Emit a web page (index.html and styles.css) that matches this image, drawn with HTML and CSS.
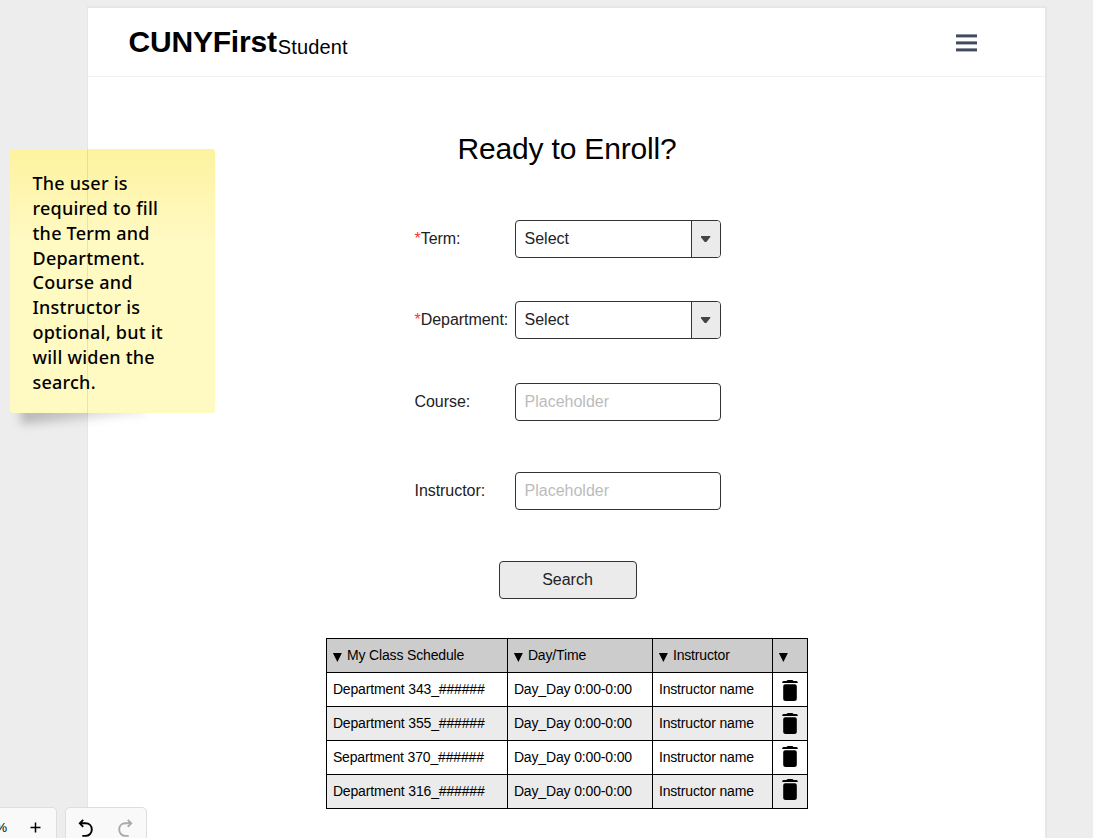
FILE: index.html
```html
<!DOCTYPE html>
<html lang="en">
<head>
<meta charset="utf-8">
<title>CUNYFirst Student</title>
<link rel="stylesheet" href="styles.css">
</head>
<body>
<svg class="defs" width="0" height="0">
  <symbol id="trash" viewBox="0 0 16 22">
    <path d="M4.500.9Q5 .1 6 .1H10Q11 .1 11.500.9H14.500Q15.700 1 15.900 3H.1Q.3 1 1.500.9ZM3.200 4.200H12.800Q14.800 4.200 14.800 6.200V18.500Q14.800 21 12.300 21H3.700Q1.200 21 1.200 18.500V6.200Q1.200 4.200 3.200 4.200Z"/>
  </symbol>
</svg>
<main class="page">
  <header class="header">
    <div class="logo"><strong>CUNYFirst</strong><span class="logo-sub">Student</span></div>
    <div class="menu"><i></i><i></i><i></i></div>
  </header>
  <h1>Ready to Enroll?</h1>
  <form class="form">
    <div class="row"><label><b>*</b>Term:</label><div class="field"><span>Select</span><div class="arrow"><i></i></div></div></div>
    <div class="row"><label><b>*</b>Department:</label><div class="field"><span>Select</span><div class="arrow"><i></i></div></div></div>
    <div class="row"><label>Course:</label><div class="field placeholder"><span>Placeholder</span></div></div>
    <div class="row last"><label>Instructor:</label><div class="field placeholder"><span>Placeholder</span></div></div>
  </form>
  <div class="search">Search</div>
  <section class="table">
    <div class="head"><i></i><span>My Class Schedule</span></div><div class="head"><i></i><span>Day/Time</span></div><div class="head"><i></i><span>Instructor</span></div><div class="head"><i></i></div>
    <div>Department 343_######</div><div>Day_Day 0:00-0:00</div><div>Instructor name</div><div class="del d1"><svg><use href="#trash"/></svg></div>
    <div class="alt">Department 355_######</div><div class="alt">Day_Day 0:00-0:00</div><div class="alt">Instructor name</div><div class="alt del d2"><svg><use href="#trash"/></svg></div>
    <div>Separtment 370_######</div><div>Day_Day 0:00-0:00</div><div>Instructor name</div><div class="del d3"><svg><use href="#trash"/></svg></div>
    <div class="alt">Department 316_######</div><div class="alt">Day_Day 0:00-0:00</div><div class="alt">Instructor name</div><div class="alt del d4"><svg><use href="#trash"/></svg></div>
  </section>
</main>
<aside class="note">The user is<br>required to fill<br>the Term and<br>Department.<br>Course and<br>Instructor is<br>optional, but it<br>will widen the<br>search.</aside>
<div class="tools">
  <div class="tool zoom"><span>%</span><svg width="11" height="11" viewBox="0 0 11 11"><path d="M5.500.5v10M.5 5.500h10"/></svg></div>
  <div class="tool history">
    <svg width="16" height="19" viewBox="0 0 16 19"><path d="M5.200.8 1.800 4.300 5.200 7.800M2 4.300H7.500C11.500 4.300 13.800 7.200 13.800 10.500C13.800 14 11.300 16.900 7.500 16.900H4.300"/></svg>
    <svg class="redo" width="16" height="19" viewBox="0 0 16 19"><path d="M5.200.8 1.800 4.300 5.200 7.800M2 4.300H7.500C11.500 4.300 13.800 7.200 13.800 10.500C13.800 14 11.300 16.900 7.500 16.900H4.300"/></svg>
  </div>
</div>
</body>
</html>
```
FILE: styles.css
```css
* { box-sizing: border-box; }
body {
  margin: 0;
  padding: 6px 0 0 87px;
  height: 838px;
  overflow: hidden;
  background: #ededed;
  font-family: "Liberation Sans", Arial, sans-serif;
  color: #000;
}
.defs { position: absolute; }
.page {
  position: relative;
  z-index: -2;
  width: 960px;
  height: 860px;
  background: #fff;
  border: 2px solid #e6e6e6;
  border-left-width: 1px;
  display: flex;
  flex-direction: column;
  align-items: center;
}
.header {
  width: 100%;
  height: 69px;
  border-bottom: 1px solid #f0f2f5;
  padding: 0 68.500px 0 40px;
  display: flex;
  justify-content: space-between;
}
.logo { display: flex; align-items: baseline; line-height: 34px; padding-top: 15px; }
.logo strong { font-size: 30px; letter-spacing: -.2px; margin-left: .5px; }
.logo-sub { font-size: 20px; letter-spacing: .15px; padding-top: 5px; margin-left: 1px; transform: translateY(2px); }
.menu { width: 21px; margin-top: 26px; display: flex; flex-direction: column; gap: 4px; }
.menu i { height: 3px; background: #414b5d; transform: translateY(.4px); }
h1 { margin: 54px 0 0 1px; font-size: 30px; font-weight: 400; letter-spacing: -.18px; line-height: 36px; height: 36px; white-space: nowrap; }
.form { width: 306px; margin-top: 53px; margin-left: 2px; display: flex; flex-direction: column; }
.row { display: flex; height: 38px; margin-bottom: 43px; }
.row:nth-child(2) { margin-bottom: 44px; }
.row:nth-child(3) { margin-bottom: 51px; }
.row.last { margin-bottom: 0; }
label { width: 100px; flex: none; font-size: 16px; letter-spacing: -.05px; line-height: 38px; color: #222; white-space: nowrap; }
label b { color: #f33; font-weight: 400; }
.field {
  width: 206px;
  border: 1px solid #333;
  border-radius: 4px;
  background: #fff;
  font-size: 16px;
  line-height: 35px;
  color: #222;
  display: flex;
  justify-content: space-between;
  padding-left: 9px;
  overflow: hidden;
}
.placeholder { color: #bcbcbc; }
.arrow { width: 29px; border-left: 1px solid #333; background: #ebebeb; display: flex; align-items: center; justify-content: center; }
.arrow i { width: 10px; height: 6px; background: #444; clip-path: polygon(5% 0, 95% 0, 100% 12%, 58% 100%, 42% 100%, 0 12%); }
.search {
  width: 138px;
  height: 38px;
  margin-top: 51px;
  margin-left: 2px;
  border: 1px solid #333;
  border-radius: 4px;
  background: #ebebeb;
  font-size: 16px;
  line-height: 35px;
  text-align: center;
  color: #222;
}
.table {
  margin-top: 39px;
  padding: 1px;
  background: #000;
  display: grid;
  grid-template-columns: 180px 144px 119px 34px;
  grid-auto-rows: 33px;
  gap: 1px;
  font-size: 14px;
  letter-spacing: -.15px;
  line-height: 32px;
  white-space: nowrap;
}
.table > div { background: #fff; padding-left: 6.400px; }
.table > .alt { background: #ebebeb; }
.table > .head { background: #ccc; display: flex; gap: 5px; padding-left: 6.400px; }
.head i { width: 9px; height: 9px; margin-top: 14px; background: #000; clip-path: polygon(0 0, 100% 0, 50% 100%); }
.table > .del { padding-left: 9.500px; }
.del svg { display: block; width: 16px; height: 22px; margin-top: 7px; }
.d2 svg { margin-top: 6px; }
.d3 svg { margin-top: 5px; }
.d4 svg { margin-top: 4px; }
.note {
  position: absolute;
  left: 10px;
  top: 149px;
  width: 205px;
  height: 264px;
  padding: 22px 0 0 22.500px;
  border-radius: 3px;
  background: linear-gradient(90deg, transparent 77px, rgba(90, 80, 0, .12) 77px 78px, transparent 78px), linear-gradient(#fdf39f, #fff9c2 34%);
  font: 500 18px/24.850px "Noto Sans", "Open Sans", sans-serif;
  letter-spacing: .23px;
  white-space: nowrap;
}
.note::before {
  content: "";
  position: absolute;
  z-index: -1;
  left: 10px;
  bottom: -6px;
  width: 125px;
  height: 22px;
  background: linear-gradient(90deg, rgba(0, 0, 0, .22), rgba(0, 0, 0, .08));
  filter: blur(5px);
  transform: rotate(-5deg);
}
.tools { position: absolute; left: 0; top: 807px; display: flex; gap: 8px; }
.tool { height: 40px; background: #f9f9f9; border: 1px solid #ddd; border-radius: 5px; display: flex; align-items: flex-start; }
.tool svg { fill: none; stroke: #000; stroke-width: 1.900; flex: none; }
.zoom { width: 57px; border-left: 0; border-radius: 0 5px 0 0; }
.zoom span { width: 7px; margin-top: 11px; display: flex; justify-content: flex-end; font-size: 13px; line-height: 17px; }
.tool.zoom svg { margin: 14px 0 0 23px; stroke-width: 1.500; }
.history { width: 82px; padding: 11px 0 0 12px; gap: 23px; }
.tool .redo { stroke: #aaa; transform: scaleX(-1); }
```
